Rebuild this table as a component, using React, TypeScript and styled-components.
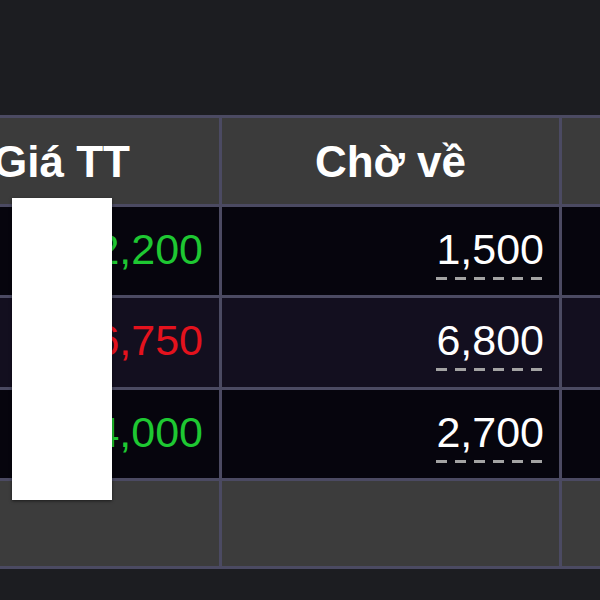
import React from "react";
import styled, { createGlobalStyle } from "styled-components";

const GlobalStyle = createGlobalStyle`
  html, body {
    margin: 0;
    padding: 0;
    background: #1c1d21;
    overflow: hidden;
  }
  body {
    font-family: "Liberation Sans", Arial, sans-serif;
  }
`;

const Page = styled.div`
  position: relative;
  width: 600px;
  height: 600px;
  overflow: hidden;
  background: #1c1d21;
`;

const TopBar = styled.div`
  height: 115px;
  background: #1c1d21;
`;

const Table = styled.div`
  display: grid;
  grid-template-columns: 315px 337px 200px;
  grid-template-rows: 86px 88px 89px 88px 85px;
  gap: 3px;
  margin-left: -96px;
  width: max-content;
  background: #4b4a62;
  border-top: 3px solid #4b4a62;
  border-bottom: 3px solid #4b4a62;
`;

const HeaderCell = styled.div`
  background: #3b3b3b;
  color: #ffffff;
  font-weight: 700;
  font-size: 44px;
  display: flex;
  align-items: center;
  justify-content: center;
  padding-top: 2px;
  white-space: nowrap;
`;

const FooterCell = styled.div`
  background: #3c3c3c;
`;

const Cell = styled.div<{ $alt?: boolean }>`
  background: ${(p) => (p.$alt ? "#130f1f" : "#06050d")};
  display: flex;
  align-items: center;
  justify-content: flex-end;
  padding-right: 15px;
`;

const Price = styled.span<{ $tone: "up" | "down" }>`
  font-size: 43px;
  line-height: 47px;
  color: ${(p) => (p.$tone === "up" ? "#1ec832" : "#e4121d")};
  padding-right: 1px;
  margin-bottom: 4px;
`;

const Pending = styled.span`
  font-size: 43px;
  line-height: 47px;
  color: #ffffff;
  padding-bottom: 7px;
  margin-top: 3px;
  background-image: linear-gradient(to right, #a3a3a3 60%, transparent 60%);
  background-size: 19px 3px;
  background-repeat: repeat-x;
  background-position: left bottom;
`;

const Mask = styled.div`
  position: absolute;
  left: 12px;
  top: 198px;
  width: 100px;
  height: 302px;
  background: #ffffff;
  box-shadow: 0 1px 3px rgba(0, 0, 0, 0.55);
`;

type Row = { price: string; tone: "up" | "down"; pending: string };

const rows: Row[] = [
  { price: "32,200", tone: "up", pending: "1,500" },
  { price: "36,750", tone: "down", pending: "6,800" },
  { price: "24,000", tone: "up", pending: "2,700" },
];

export default function App() {
  return (
    <>
      <GlobalStyle />
      <Page>
        <TopBar />
        <Table>
          <HeaderCell>Giá TT</HeaderCell>
          <HeaderCell>Chờ về</HeaderCell>
          <HeaderCell />
          {rows.map((r, i) => (
            <React.Fragment key={i}>
              <Cell $alt={i === 1}>
                <Price $tone={r.tone}>{r.price}</Price>
              </Cell>
              <Cell $alt={i === 1}>
                <Pending>{r.pending}</Pending>
              </Cell>
              <Cell $alt={i === 1} />
            </React.Fragment>
          ))}
          <FooterCell />
          <FooterCell />
          <FooterCell />
        </Table>
        <Mask />
      </Page>
    </>
  );
}
